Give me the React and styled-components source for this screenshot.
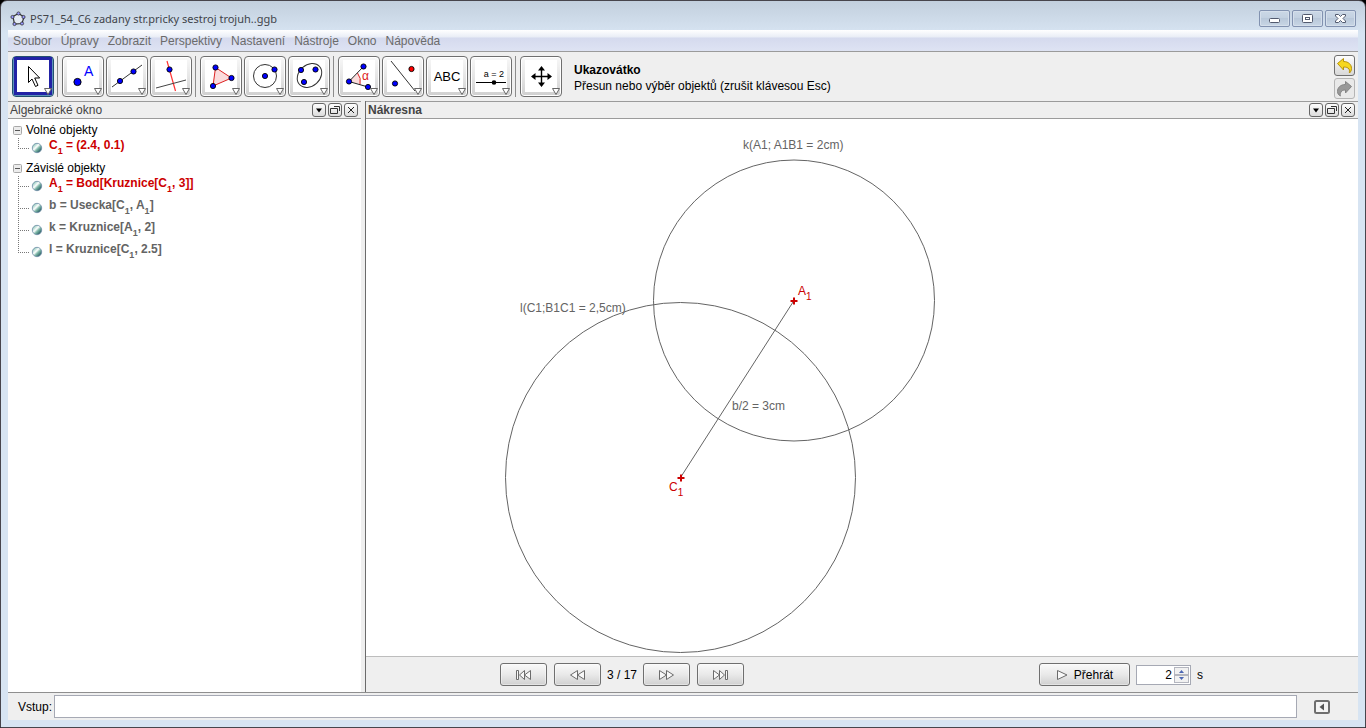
import React, { useState } from "react";
import styled, { createGlobalStyle, css } from "styled-components";

const Global = createGlobalStyle`
  * { box-sizing: border-box; }
  html, body { margin: 0; background: #000; }
  body, button, input {
    font-family: "Liberation Sans", Arial, sans-serif;
    font-size: 12px;
    line-height: 16px;
  }
  button { padding: 0; margin: 0; color: #000; }
  svg { display: block; }
`;

const WindowFrame = styled.div`
  display: flex;
  flex-direction: column;
  min-height: 100vh;
  padding: 1px 7px 7px;
  border: 1px solid #47454c;
  border-radius: 7px 7px 0 0;
  background: linear-gradient(#c2cfdd 0, #d7e4f2 32px, #d7e4f2 100%);
`;

const TitleBar = styled.header`
  display: flex;
  align-items: center;
  height: 28px;
  padding: 5px 2px 0;
  color: #41444a;
`;

const Title = styled.h1`
  flex: 1;
  margin: 0 0 0 4px;
  font-family: "Noto Sans", "Open Sans", sans-serif;
  font-size: 11px;
  font-weight: 400;
`;

const WindowButtons = styled.div`
  display: flex;
  gap: 2px;
`;

const WindowButton = styled.button`
  display: grid;
  place-items: center;
  width: 31px;
  height: 17px;
  border: 1px solid #8292b0;
  border-radius: 2px;
  background: linear-gradient(#cbd8e6, #c3d1e1 45%, #b9c8da 50%, #c8d6e5);
  box-shadow: inset 0 0 0 1px #d5dfeb;
`;

const MenuBar = styled.nav`
  display: flex;
  align-items: center;
  gap: 9px;
  height: 21px;
  padding: 0 5px 0 5px;
  background: linear-gradient(#ffffff 0, #e9edf6 7px, #d5daee 8px, #dee3f3 100%);
`;

const MenuItem = styled.a`
  color: #6b6b6b;
  text-decoration: none;
`;

const ToolBar = styled.div`
  display: flex;
  align-items: center;
  height: 50px;
  padding: 0 3px 0 4px;
  border-top: 1px solid #9b9b9b;
  background: #efefef;
`;

const ToolGroup = styled.div`
  display: flex;
  gap: 2px;
  & + & {
    margin-left: 3px;
    padding-left: 4px;
    border-left: 1px solid #8c8c8c;
  }
`;

const ToolButton = styled.button`
  position: relative;
  display: flex;
  justify-content: center;
  width: 42px;
  height: 41px;
  padding-top: 3px;
  border: 1px solid #6f6f6f;
  border-radius: 4px;
  background: linear-gradient(#f8f8f8, #e6e6e6 50%, #cfcfcf);
  box-shadow: inset 0 0 0 1px #ffffff;
  ${(p) => p.$active && css`
    border-color: #24506f;
    background: linear-gradient(#7fa8c4, #b8dcec);
    box-shadow: inset 0 0 0 1px #5c93b8;
  `}
`;

const ToolFace = styled.span`
  width: 32px;
  height: 32px;
  background: #fff;
  ${(p) => p.$active && css`
    outline: 3px solid #2222a6;
  `}
`;

const DropMark = styled.svg`
  position: absolute;
  right: 0;
  bottom: 0;
`;

const ToolHelp = styled.div`
  flex: 1;
  padding: 2px 0 0 12px;
`;

const HistoryButtons = styled.div`
  display: flex;
  flex-direction: column;
  gap: 2px;
`;

const HistoryButton = styled.button`
  display: grid;
  place-items: center;
  width: 21px;
  height: 21px;
  border: 1px solid #6f6f6f;
  border-radius: 3px;
  background: linear-gradient(#fdfdfd, #d8d8d8);
  &:disabled { border-color: #b5b5b5; background: #e9e9e9; }
`;

const Workspace = styled.main`
  flex: 1;
  display: flex;
  min-height: 0;
  background: #efefef;
`;

const SidePanel = styled.section`
  display: flex;
  flex: none;
  flex-direction: column;
  width: 353px;
  margin-right: 4px;
  background: #fff;
`;

const MainPanel = styled.section`
  flex: 1;
  display: flex;
  flex-direction: column;
  min-width: 0;
  border-left: 1px solid #6b6b6b;
  background: #fff;
`;

const PanelHeader = styled.div`
  display: flex;
  align-items: center;
  gap: 2px;
  height: 18px;
  padding: 0 3px 0 2px;
  border-top: 1px solid #9b9b9b;
  border-bottom: 1px solid #9b9b9b;
  background: #efefef;
`;

const PanelTitle = styled.h2`
  flex: 1;
  margin: 0;
  font-size: 12px;
  line-height: 18px;
  font-weight: ${(p) => (p.$bold ? 700 : 400)};
  color: #444;
`;

const PanelButton = styled.button`
  display: grid;
  place-items: center;
  width: 14px;
  height: 14px;
  border: 1px solid #666;
  border-radius: 3px;
  background: linear-gradient(#fdfdfd, #dcdcdc);
`;

const Tree = styled.ul`
  margin: 0;
  padding: 3px 0 0 5px;
  list-style: none;
`;

const GroupToggle = styled.button`
  display: flex;
  align-items: center;
  gap: 4px;
  height: 16px;
  border: 0;
  background: none;
`;

const Leaves = styled.ul`
  margin: 0;
  padding: 0 0 0 5px;
  list-style: none;
`;

const Leaf = styled.li`
  display: flex;
  height: 22px;
  color: ${(p) => (p.$free ? "#cc0000" : "#646464")};
  font-weight: 700;
  line-height: 14px;
  white-space: pre;
  sub { font-size: 9px; line-height: 0; vertical-align: -5px; }
`;

const Branch = styled.svg`
  flex: none;
  margin-right: 6px;
`;

const CanvasArea = styled.svg`
  flex: 1;
  width: 100%;
  min-height: 537px;
  background: #fff;
  text { font-size: 12px; fill: #646464; }
  .point { fill: #cc0000; }
  .point tspan { font-size: 10px; }
`;

const StepBar = styled.div`
  display: flex;
  align-items: center;
  justify-content: space-between;
  height: 36px;
  padding: 0 155px 0 134px;
  border-top: 1px solid #bdbdbd;
  background: #efefef;
`;

const StepGroup = styled.div`
  display: flex;
  align-items: center;
  gap: ${(p) => p.$gap}px;
`;

const StepButton = styled.button`
  display: flex;
  align-items: center;
  justify-content: center;
  gap: 6px;
  width: ${(p) => p.$width || 47}px;
  height: 23px;
  border: 1px solid #6f6f6f;
  border-radius: 3px;
  background: linear-gradient(#f9f9f9, #e9e9e9 50%, #d0d0d0);
  box-shadow: inset 0 0 0 1px #ffffff66;
`;

const Spinner = styled.span`
  display: flex;
  width: 55px;
  height: 20px;
  padding: 1px;
  border: 1px solid #a6a9b4;
  background: #fff;
`;

const SpinField = styled.input`
  flex: 1;
  min-width: 0;
  padding: 0 2px 0 0;
  border: 0;
  background: none;
  text-align: right;
`;

const SpinArrows = styled.span`
  display: flex;
  flex-direction: column;
  width: 15px;
`;

const SpinArrow = styled.button`
  display: grid;
  place-items: center;
  height: 8px;
  border: 1px solid #b4b6bf;
  background: #f1f1f1;
`;

const InputBar = styled.form`
  display: flex;
  align-items: center;
  height: 28px;
  padding: 0 27px 0 10px;
  border-top: 1px solid #8f8f8f;
  background: #efefef;
`;

const CommandField = styled.input`
  flex: 1;
  height: 23px;
  margin: 0 16px 0 2px;
  border: 1px solid #a6a9b4;
  background: #fff;
`;

const HelpButton = styled.button`
  display: grid;
  place-items: center;
  width: 18px;
  height: 16px;
  border: 0;
  background: none;
`;

const Dot = ({ x, y, fill = "#0000ff" }) => (
  <circle cx={x} cy={y} r="2.6" fill={fill} stroke="#000" strokeWidth="0.9" />
);

const Face = ({ children }) => (
  <svg width="32" height="32" viewBox="0 0 32 32" fill="none">{children}</svg>
);

const toolIcons = {
  move: (
    <Face>
      <path d="M11.5 6.5v16l3.500-3.500 3.500 7.500 2.500-1.200-3.300-7.300h5z" fill="#fff" stroke="#000" />
    </Face>
  ),
  point: (
    <Face>
      <circle cx="10.500" cy="22" r="3.600" fill="#0000ff" stroke="#000" />
      <text x="17" y="16" fontSize="14" fill="#0000ff">A</text>
    </Face>
  ),
  line: (
    <Face>
      <path d="M1 27L31 5" stroke="#333" />
      <Dot x="9" y="21" /><Dot x="22.500" y="11.500" />
    </Face>
  ),
  perpendicular: (
    <Face>
      <path d="M12 1L20.500 31" stroke="#f33" strokeWidth="1.200" />
      <path d="M1 28L31 20" stroke="#444" />
      <Dot x="14.500" y="9.500" />
    </Face>
  ),
  polygon: (
    <Face>
      <path d="M10.500 7.500L26.500 18 8 26z" fill="#fbdcdc" stroke="#dd2222" />
      <Dot x="10.500" y="7.500" /><Dot x="26.500" y="18" /><Dot x="8" y="26" />
    </Face>
  ),
  circle: (
    <Face>
      <circle cx="16" cy="16" r="11.500" stroke="#333" />
      <Dot x="16" y="16" /><Dot x="25.500" y="9.500" />
    </Face>
  ),
  conic: (
    <Face>
      <ellipse cx="16.500" cy="15.500" rx="13.500" ry="10.500" transform="rotate(-42 16.500 15.500)" stroke="#333" />
      <Dot x="8" y="10" /><Dot x="22.500" y="9.500" /><Dot x="11" y="22" />
    </Face>
  ),
  angle: (
    <Face>
      <path d="M6 21.500L14.500 13.500Q18 18 17 24z" fill="#fbdcdc" />
      <path d="M14.500 13Q18.500 18 17 24.500" stroke="#dd2222" />
      <path d="M20.500 6.500L6 21.500 25 27" stroke="#222" />
      <Dot x="20.500" y="6.500" /><Dot x="6" y="21.500" /><Dot x="25" y="27" />
      <text x="19" y="20" fontSize="12" fill="#dd2222">α</text>
    </Face>
  ),
  reflect: (
    <Face>
      <path d="M4 1L28 31" stroke="#333" />
      <Dot x="24.500" y="9" fill="#ff0000" /><Dot x="8" y="23.500" />
    </Face>
  ),
  text: (
    <Face>
      <text x="16" y="21" fontSize="13" textAnchor="middle" fill="#000">ABC</text>
    </Face>
  ),
  slider: (
    <Face>
      <text x="19" y="17" fontSize="9" textAnchor="middle" fill="#000">a = 2</text>
      <path d="M1 22.500H31" stroke="#000" />
      <circle cx="19" cy="22.500" r="2.300" fill="#000" />
    </Face>
  ),
  pan: (
    <Face>
      <path d="M16.500 8v17M8 16.500h17" stroke="#000" strokeWidth="1.400" />
      <path d="M16.500 6l-3.500 4.500h7zM16.500 27l-3.500-4.500h7zM6 16.500l4.500-3.500v7zM27 16.500l-4.500-3.500v7z" fill="#000" />
    </Face>
  ),
};

const toolGroups = [
  [["move", "Ukazovátko"]],
  [["point", "Nový bod"], ["line", "Přímka"], ["perpendicular", "Kolmice"]],
  [["polygon", "Mnohoúhelník"], ["circle", "Kružnice"], ["conic", "Elipsa"]],
  [["angle", "Úhel"], ["reflect", "Osová souměrnost"], ["text", "Text"], ["slider", "Posuvník"]],
  [["pan", "Posunout nákresnu"]],
];

const menus = ["Soubor", "Úpravy", "Zobrazit", "Perspektivy", "Nastavení", "Nástroje", "Okno", "Nápověda"];

const groups = [
  { name: "Volné objekty", items: [{ free: true, text: <>C<sub>1</sub> = (2.4, 0.1)</> }] },
  {
    name: "Závislé objekty",
    items: [
      { free: true, text: <>A<sub>1</sub> = Bod[Kruznice[C<sub>1</sub>, 3]]</> },
      { text: <>b = Usecka[C<sub>1</sub>, A<sub>1</sub>]</> },
      { text: <>k = Kruznice[A<sub>1</sub>, 2]</> },
      { text: <>l = Kruznice[C<sub>1</sub>, 2.5]</> },
    ],
  },
];

const LogoIcon = () => (
  <svg width="16" height="16" viewBox="0 0 16 16">
    <path d="M3 5.500L8.500 2.500 14 6l-2 6.500-7.500.5z" fill="#e4ebf4" stroke="#333" strokeWidth="1.200" />
    {[[2.500, 6], [8.500, 2.500], [13.500, 6], [12, 12.500], [4.500, 13]].map(([x, y]) => (
      <circle key={x} cx={x} cy={y} r="1.600" fill="#9999ff" stroke="#222" strokeWidth="0.700" />
    ))}
  </svg>
);

const LeafMark = ({ last }) => (
  <Branch width="25" height="22" viewBox="0 0 25 22">
    <defs>
      <linearGradient id="ball" x1="0.1" y1="0.1" x2="0.9" y2="0.9">
        <stop offset="0.1" stopColor="#9ccfc2" />
        <stop offset="0.4" stopColor="#ffffff" />
        <stop offset="0.6" stopColor="#7fb8a8" />
        <stop offset="1" stopColor="#174a55" />
      </linearGradient>
    </defs>
    <path d={`M0.500 0V${last ? 11 : 22}M0 10.500H11`} fill="none" stroke="#777" strokeDasharray="1 1" />
    <circle cx="19" cy="10" r="4.700" fill="url(#ball)" stroke="#6d8ba6" strokeWidth="0.800" />
  </Branch>
);

const PanelControls = () => (
  <>
    <PanelButton aria-label="Nabídka">
      <svg width="10" height="10"><path d="M2 3.500h6L5 7.500z" fill="#000" /></svg>
    </PanelButton>
    <PanelButton aria-label="Oddělit">
      <svg width="12" height="10" fill="none" stroke="#333">
        <path d="M1.500 3.500h7v5h-7zM5 1.500h5.500V6" />
      </svg>
    </PanelButton>
    <PanelButton aria-label="Zavřít panel">
      <svg width="10" height="10"><path d="M2 2l6 6M8 2l-6 6" stroke="#222" /></svg>
    </PanelButton>
  </>
);

const ToolArrow = () => (
  <DropMark width="10" height="9" viewBox="0 0 10 9" aria-hidden="true">
    <path d="M1.500 1.500h7L5 7.500z" fill="#fff" stroke="#666" />
  </DropMark>
);

const StepIcon = ({ d, w = 17 }) => (
  <svg width={w} height="12" fill="#f8f8f8" stroke="#6b6b6b"><path d={d} /></svg>
);

const Cross = ({ x, y }) => (
  <path d={`M${x - 3.500} ${y}h7M${x} ${y - 3.500}v7`} stroke="#cc0000" strokeWidth="2" />
);

export default function App() {
  const [tool, setTool] = useState("move");
  const [seconds, setSeconds] = useState(2);
  return (
    <>
      <Global />
      <WindowFrame>
        <TitleBar>
          <LogoIcon />
          <Title>PS71_54_C6 zadany str.pricky sestroj trojuh..ggb</Title>
          <WindowButtons>
            <WindowButton aria-label="Minimalizovat">
              <svg width="13" height="11"><rect x="1.500" y="5.500" width="10" height="4" rx="1" fill="#fff" stroke="#525a6e" /></svg>
            </WindowButton>
            <WindowButton aria-label="Maximalizovat">
              <svg width="13" height="11" fill="#fff" stroke="#525a6e">
                <rect x="1.500" y="1.500" width="10" height="8" rx="1" />
                <rect x="4.500" y="4.500" width="4" height="2" />
              </svg>
            </WindowButton>
            <WindowButton aria-label="Zavřít">
              <svg width="13" height="11">
                <path d="M1.500 1.500h3L6.500 3.500 8.500 1.500h3v1.500L9 5.500 11.500 8v1.500h-3L6.500 7.500 4.500 9.500h-3V8L4 5.500 1.500 3z" fill="#fff" stroke="#525a6e" />
              </svg>
            </WindowButton>
          </WindowButtons>
        </TitleBar>

        <MenuBar>
          {menus.map((m) => <MenuItem key={m} href="#">{m}</MenuItem>)}
        </MenuBar>

        <ToolBar>
          {toolGroups.map((group) => (
            <ToolGroup key={group[0][0]}>
              {group.map(([id, label]) => (
                <ToolButton key={id} aria-label={label} $active={tool === id} onClick={() => setTool(id)}>
                  <ToolFace $active={tool === id}>{toolIcons[id]}</ToolFace>
                  <ToolArrow />
                </ToolButton>
              ))}
            </ToolGroup>
          ))}
          <ToolHelp>
            <div><b>Ukazovátko</b></div>
            <div>Přesun nebo výběr objektů (zrušit klávesou Esc)</div>
          </ToolHelp>
          <HistoryButtons>
            <HistoryButton aria-label="Zpět">
              <svg width="17" height="17">
                <path d="M1.500 6.500L7.500 1.500v3c5 0 8 3 8 7 0 2-1 3.500-2 4.500-.5-1 .5-2.500-.5-4s-3-2-5.500-2v3z" fill="#f6d71e" stroke="#b8930a" />
              </svg>
            </HistoryButton>
            <HistoryButton aria-label="Znovu" disabled>
              <svg width="17" height="17">
                <path d="M15.500 6.500L9.500 1.500v3c-5 0-8 3-8 7 0 2 1 3.500 3 4.500-.5-1-.5-2.500.5-4s2-2 4.500-2v3z" fill="#989898" stroke="#858585" />
              </svg>
            </HistoryButton>
          </HistoryButtons>
        </ToolBar>

        <Workspace>
          <SidePanel>
            <PanelHeader>
              <PanelTitle>Algebraické okno</PanelTitle>
              <PanelControls />
            </PanelHeader>
            <Tree>
              {groups.map((g) => (
                <li key={g.name}>
                  <GroupToggle>
                    <svg width="9" height="9">
                      <rect x="0.500" y="0.500" width="8" height="8" rx="1" fill="#ececec" stroke="#a8a8a8" />
                      <path d="M2 4.500h5" stroke="#555" />
                    </svg>
                    {g.name}
                  </GroupToggle>
                  <Leaves>
                    {g.items.map((it, i) => (
                      <Leaf key={i} $free={it.free}>
                        <LeafMark last={i === g.items.length - 1} />
                        <span>{it.text}</span>
                      </Leaf>
                    ))}
                  </Leaves>
                </li>
              ))}
            </Tree>
          </SidePanel>

          <MainPanel>
            <PanelHeader>
              <PanelTitle $bold>Nákresna</PanelTitle>
              <PanelControls />
            </PanelHeader>
            <CanvasArea>
              <g fill="none" stroke="#646464">
                <circle cx="428" cy="181.500" r="140.500" />
                <circle cx="314.500" cy="358.500" r="175" />
                <path d="M314.500 358.500L428 181.500" />
              </g>
              <Cross x={428} y={182} />
              <Cross x={315} y={359} />
              <text x="377" y="30">k(A1; A1B1 = 2cm)</text>
              <text x="154" y="193">l(C1;B1C1 = 2,5cm)</text>
              <text x="366" y="291">b/2 = 3cm</text>
              <text className="point" x="432" y="176">A<tspan dy="5">1</tspan></text>
              <text className="point" x="303" y="372">C<tspan dy="5">1</tspan></text>
            </CanvasArea>
            <StepBar>
              <StepGroup $gap="6">
                <StepGroup $gap="7">
                  <StepButton aria-label="První krok"><StepIcon d="M1.500 1.500h2v9h-2zM9.500 1.500v9l-5-4.500zM15.500 1.500v9l-6-4.500z" /></StepButton>
                  <StepButton aria-label="Předchozí krok"><StepIcon d="M8.500 1.500v9L1.500 6zM15.500 1.500v9L8.500 6z" /></StepButton>
                </StepGroup>
                <span>3 / 17</span>
                <StepGroup $gap="7">
                  <StepButton aria-label="Další krok"><StepIcon d="M1.500 1.500v9l7-4.500zM8.500 1.500v9l7-4.500z" /></StepButton>
                  <StepButton aria-label="Poslední krok"><StepIcon d="M1.500 1.500v9l6-4.500zM7.500 1.500v9l5-4.500zM13.500 1.500h2v9h-2z" /></StepButton>
                </StepGroup>
              </StepGroup>
              <StepGroup $gap="6">
                <StepButton $width="91"><StepIcon w={12} d="M1.500 1.500v9L11 6z" />Přehrát</StepButton>
                <Spinner>
                  <SpinField aria-label="Sekundy" value={seconds} onChange={(e) => setSeconds(e.target.value)} />
                  <SpinArrows>
                    <SpinArrow aria-label="Více" onClick={() => setSeconds(+seconds + 1)}>
                      <svg width="7" height="4"><path d="M1 4h5L3.500 1z" fill="#4a66b4" /></svg>
                    </SpinArrow>
                    <SpinArrow aria-label="Méně" onClick={() => setSeconds(+seconds - 1)}>
                      <svg width="7" height="4"><path d="M1 0h5L3.500 3z" fill="#4a66b4" /></svg>
                    </SpinArrow>
                  </SpinArrows>
                </Spinner>
                <span>s</span>
              </StepGroup>
            </StepBar>
          </MainPanel>
        </Workspace>

        <InputBar onSubmit={(e) => e.preventDefault()}>
          <label htmlFor="command">Vstup:</label>
          <CommandField id="command" />
          <HelpButton type="button" aria-label="Nápověda příkazů">
            <svg width="16" height="14">
              <rect x="1" y="1" width="14" height="12" rx="1.500" fill="#f4f4f4" stroke="#6e6e6e" strokeWidth="2" />
              <path d="M10 3.500v7L5.500 7z" fill="#555" />
            </svg>
          </HelpButton>
        </InputBar>
      </WindowFrame>
    </>
  );
}
